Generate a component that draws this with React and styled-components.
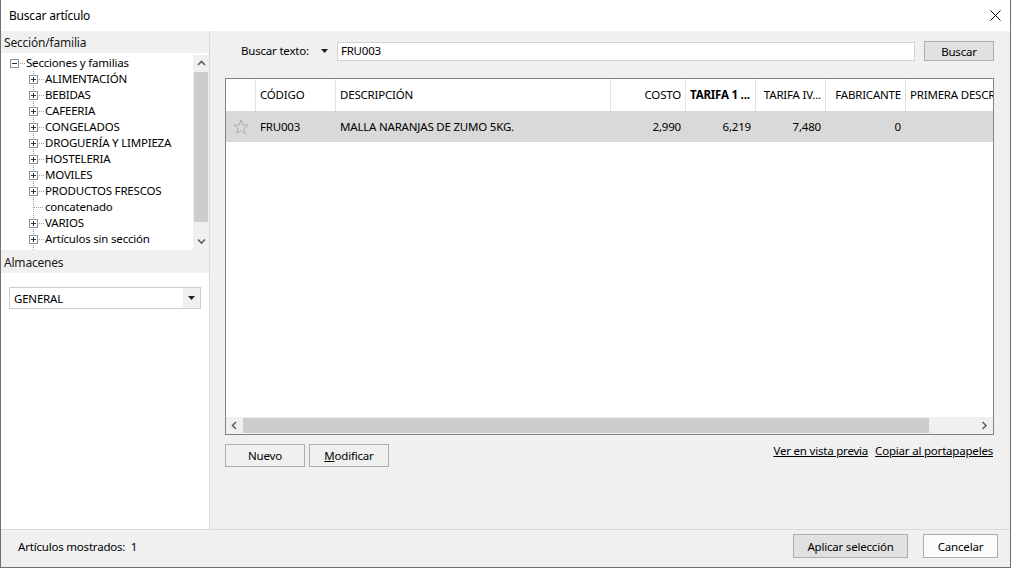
import React from 'react';
import styled, { createGlobalStyle } from 'styled-components';

const FONT = `"Noto Sans", "Segoe UI", "Liberation Sans", sans-serif`;

const Global = createGlobalStyle`
  html, body { margin: 0; padding: 0; background: #ffffff; }
  body { font-family: ${FONT}; font-size: 11.5px; letter-spacing: -0.2px; color: #000; }
  * { box-sizing: border-box; }
`;

const Window = styled.div`
  width: 1011px;
  height: 568px;
  display: flex;
  flex-direction: column;
  border: 1px solid #6f6f6f;
  border-top: none;
  background: #f0f0f0;
  overflow: hidden;
`;

const TitleBar = styled.div`
  flex: none;
  height: 31px;
  background: #ffffff;
  display: flex;
  align-items: center;
  justify-content: space-between;
  padding: 0 9px 0 8px;
  font-size: 12px;
`;

const Main = styled.div`
  flex: 1;
  min-height: 0;
  display: flex;
`;

const LeftPanel = styled.div`
  width: 209px;
  flex: none;
  background: #ffffff;
  border-right: 1px solid #dadada;
  display: flex;
  flex-direction: column;
`;

const PanelHeader = styled.div`
  height: ${p => p.$h}px;
  flex: none;
  background: #f0f0f0;
  display: flex;
  align-items: center;
  padding: 1px 0 0 3px;
  font-size: 12px;
  color: #1a1a1a;
`;

const TreeArea = styled.div`
  height: 197px;
  flex: none;
  display: flex;
  padding-top: 2px;
  background: #ffffff;
`;

const TreeList = styled.div`
  flex: 1;
  overflow: hidden;
  display: flex;
  flex-direction: column;
`;

const TreeRow = styled.div`
  height: 16px;
  flex: none;
  display: flex;
  align-items: center;
  padding-left: ${p => (p.$level === 0 ? 5 : 24)}px;
  white-space: nowrap;
`;

const TreeLabel = styled.span`
  line-height: 16px;
`;

const VScroll = styled.div`
  width: 16px;
  flex: none;
  background: #f0f0f0;
  display: flex;
  flex-direction: column;
`;

const ScrollArrow = styled.div`
  flex: none;
  width: ${p => p.$w || 16}px;
  height: ${p => p.$h || 17}px;
  display: flex;
  align-items: center;
  justify-content: center;
`;

const VThumb = styled.div`
  height: 150px;
  flex: none;
  margin: 0 1px;
  background: #cdcdcd;
`;

const Flex1 = styled.div`
  flex: 1;
`;

const ComboWrap = styled.div`
  padding: 14px 8px 0 8px;
`;

const Combo = styled.div`
  height: 22px;
  border: 1px solid #cccccc;
  background: #ffffff;
  display: flex;
  align-items: center;
`;

const ComboText = styled.div`
  flex: 1;
  padding-left: 4px;
`;

const ComboArrow = styled.div`
  width: 17px;
  height: 100%;
  background: #f0f0f0;
  display: flex;
  align-items: center;
  justify-content: center;
`;

const RightPanel = styled.div`
  flex: 1;
  min-width: 0;
  background: #f0f0f0;
  padding: 10px 16px 0 15px;
  display: flex;
  flex-direction: column;
`;

const SearchRow = styled.div`
  height: 20px;
  display: flex;
  align-items: center;
  padding-left: 16px;
`;

const SearchLabel = styled.span`
  margin-right: 10px;
  padding-bottom: 1px;
`;

const DropCaret = styled.span`
  width: 12px;
  display: flex;
  align-items: center;
  justify-content: center;
  margin-right: 6px;
`;

const TextBox = styled.div`
  flex: 1;
  height: 19px;
  background: #ffffff;
  border: 1px solid #d2d2d2;
  display: flex;
  align-items: center;
  padding: 0 0 1px 3px;
`;

const Button = styled.div`
  width: ${p => p.$w}px;
  height: ${p => p.$h}px;
  flex: none;
  background: ${p => p.$bg || '#e1e1e1'};
  border: 1px solid #adadad;
  display: flex;
  align-items: center;
  justify-content: center;
  margin-left: ${p => p.$ml || 0}px;
  color: #000;
`;

const Grid = styled.div`
  margin-top: 17px;
  height: 357px;
  flex: none;
  border: 1px solid #828282;
  background: #ffffff;
  display: flex;
  flex-direction: column;
  overflow: hidden;
`;

const COLS = '30px 80px 275px 75px 70px 70px 80px 87px';

const HeaderRow = styled.div`
  height: 32px;
  flex: none;
  display: grid;
  grid-template-columns: ${COLS};
  background: #ffffff;
`;

const HeaderCell = styled.div`
  border-right: ${p => (p.$last ? 'none' : '1px solid #e3e3e3')};
  display: flex;
  align-items: center;
  justify-content: ${p => (p.$right ? 'flex-end' : 'flex-start')};
  padding: 0 ${p => (p.$right ? 4 : 0)}px 1px ${p => (p.$right ? 0 : 4)}px;
  font-weight: ${p => (p.$bold ? 700 : 400)};
  white-space: nowrap;
  overflow: hidden;
`;

const DataRow = styled.div`
  height: 32px;
  flex: none;
  display: grid;
  grid-template-columns: ${COLS};
  background: #d9d9d9;
  border-bottom: 1px solid #ffffff;
`;

const Cell = styled.div`
  display: flex;
  align-items: center;
  justify-content: ${p => (p.$right ? 'flex-end' : p.$center ? 'center' : 'flex-start')};
  padding: 0 ${p => (p.$right ? 5 : 0)}px 0 ${p => (p.$right || p.$center ? 0 : 4)}px;
  white-space: nowrap;
  overflow: hidden;
`;

const HScroll = styled.div`
  height: 17px;
  flex: none;
  background: #f0f0f0;
  display: flex;
  align-items: stretch;
`;

const HThumb = styled.div`
  width: 686px;
  flex: none;
  margin: 1px 0;
  background: #cdcdcd;
`;

const ActionRow = styled.div`
  margin-top: 9px;
  display: flex;
  justify-content: space-between;
  align-items: flex-start;
`;

const ButtonGroup = styled.div`
  display: flex;
`;

const Links = styled.div`
  display: flex;
  gap: 7px;
  line-height: 13px;
  padding-right: 1px;
`;

const Link = styled.span`
  text-decoration: underline;
  color: #000;
`;

const Footer = styled.div`
  flex: none;
  height: 38px;
  border-top: 1px solid #dadada;
  background: #f0f0f0;
  display: flex;
  align-items: flex-start;
  padding: 4px 12px 0 17px;
`;

const FooterText = styled.div`
  flex: 1;
  line-height: 26px;
`;

const AccessKey = styled.span`
  text-decoration: underline;
`;

const CloseIcon = () => (
  <svg width="11" height="11" viewBox="0 0 11 11">
    <path d="M0.5 0.5 L10.5 10.5 M10.5 0.5 L0.5 10.5" stroke="#000" strokeWidth="1" fill="none" />
  </svg>
);

const TreeGlyph = ({ kind, line }) => (
  <svg width="20" height="16" viewBox="0 0 20 16" style={{ flex: 'none' }}>
    {line && (
      <line x1="8.5" y1="0" x2="8.5" y2="16" stroke="#a0a0a0" strokeDasharray="1 1" />
    )}
    {kind !== 'none' && (
      <line x1={kind === 'leaf' ? 9 : 14} y1="8.5" x2="19" y2="8.5" stroke="#a0a0a0" strokeDasharray="1 1" />
    )}
    {(kind === 'plus' || kind === 'minus') && (
      <>
        <rect x="4.5" y="4.5" width="8" height="8" fill="#ffffff" stroke="#919191" />
        <line x1="6" y1="8.5" x2="11" y2="8.5" stroke="#333" />
        {kind === 'plus' && <line x1="8.5" y1="6" x2="8.5" y2="11" stroke="#333" />}
      </>
    )}
  </svg>
);

const Chevron = ({ dir }) => {
  const pts = {
    up: '1,5 4.5,1.5 8,5',
    down: '1,1.5 4.5,5 8,1.5',
    left: '5,1 1.5,4.5 5,8',
    right: '1.5,1 5,4.5 1.5,8',
  }[dir];
  const vertical = dir === 'up' || dir === 'down';
  return (
    <svg width={vertical ? 9 : 7} height={vertical ? 7 : 9} viewBox={vertical ? '0 0 9 7' : '0 0 7 9'}>
      <polyline points={pts} fill="none" stroke="#606060" strokeWidth="1.6" />
    </svg>
  );
};

const Caret = () => (
  <svg width="7" height="4" viewBox="0 0 7 4">
    <polygon points="0,0 7,0 3.5,4" fill="#222" />
  </svg>
);

const Star = () => (
  <svg width="16" height="16" viewBox="0 0 16 16">
    <polygon
      points="8,1 9.9,6 15,6.2 11,9.4 12.4,14.6 8,11.6 3.6,14.6 5,9.4 1,6.2 6.1,6"
      fill="none"
      stroke="#b0b0b0"
      strokeWidth="1"
      strokeLinejoin="round"
    />
  </svg>
);

const families = [
  { name: 'ALIMENTACIÓN', kind: 'plus' },
  { name: 'BEBIDAS', kind: 'plus' },
  { name: 'CAFEERIA', kind: 'plus' },
  { name: 'CONGELADOS', kind: 'plus' },
  { name: 'DROGUERÍA Y LIMPIEZA', kind: 'plus' },
  { name: 'HOSTELERIA', kind: 'plus' },
  { name: 'MOVILES', kind: 'plus' },
  { name: 'PRODUCTOS FRESCOS', kind: 'plus' },
  { name: 'concatenado', kind: 'leaf' },
  { name: 'VARIOS', kind: 'plus' },
  { name: 'Artículos sin sección', kind: 'plus' },
];

const columns = [
  { label: '' },
  { label: 'CÓDIGO' },
  { label: 'DESCRIPCIÓN' },
  { label: 'COSTO', right: true },
  { label: 'TARIFA 1 ...', bold: true },
  { label: 'TARIFA IV...', right: true },
  { label: 'FABRICANTE', right: true },
  { label: 'PRIMERA DESCRIPCIÓN', last: true },
];

export default function App() {
  return (
    <>
      <Global />
      <Window>
        <TitleBar>
          <span>Buscar artículo</span>
          <CloseIcon />
        </TitleBar>
        <Main>
          <LeftPanel>
            <PanelHeader $h={22}>Sección/familia</PanelHeader>
            <TreeArea>
              <TreeList>
                <TreeRow $level={0}>
                  <TreeGlyph kind="minus" />
                  <TreeLabel>Secciones y familias</TreeLabel>
                </TreeRow>
                {families.map(f => (
                  <TreeRow key={f.name} $level={1}>
                    <TreeGlyph kind={f.kind} line />
                    <TreeLabel>{f.name}</TreeLabel>
                  </TreeRow>
                ))}
                <TreeRow $level={1}>
                  <TreeGlyph kind="none" line />
                </TreeRow>
              </TreeList>
              <VScroll>
                <ScrollArrow><Chevron dir="up" /></ScrollArrow>
                <VThumb />
                <Flex1 />
                <ScrollArrow><Chevron dir="down" /></ScrollArrow>
              </VScroll>
            </TreeArea>
            <PanelHeader $h={23}>Almacenes</PanelHeader>
            <ComboWrap>
              <Combo>
                <ComboText>GENERAL</ComboText>
                <ComboArrow><Caret /></ComboArrow>
              </Combo>
            </ComboWrap>
          </LeftPanel>
          <RightPanel>
            <SearchRow>
              <SearchLabel>Buscar texto:</SearchLabel>
              <DropCaret><Caret /></DropCaret>
              <TextBox>FRU003</TextBox>
              <Button $w={70} $h={20} $ml={9}>Buscar</Button>
            </SearchRow>
            <Grid>
              <HeaderRow>
                {columns.map((c, i) => (
                  <HeaderCell key={i} $right={c.right} $bold={c.bold} $last={c.last}>
                    {c.label}
                  </HeaderCell>
                ))}
              </HeaderRow>
              <DataRow>
                <Cell $center><Star /></Cell>
                <Cell>FRU003</Cell>
                <Cell>MALLA NARANJAS DE ZUMO 5KG.</Cell>
                <Cell $right>2,990</Cell>
                <Cell $right>6,219</Cell>
                <Cell $right>7,480</Cell>
                <Cell $right>0</Cell>
                <Cell></Cell>
              </DataRow>
              <Flex1 />
              <HScroll>
                <ScrollArrow $w={17} $h={17}><Chevron dir="left" /></ScrollArrow>
                <HThumb />
                <Flex1 />
                <ScrollArrow $w={17} $h={17}><Chevron dir="right" /></ScrollArrow>
              </HScroll>
            </Grid>
            <ActionRow>
              <ButtonGroup>
                <Button $w={80} $h={23} $bg="#f0f0f0">Nuevo</Button>
                <Button $w={80} $h={23} $bg="#f0f0f0" $ml={4}>
                  <span><AccessKey>M</AccessKey>odificar</span>
                </Button>
              </ButtonGroup>
              <Links>
                <Link>Ver en vista previa</Link>
                <Link>Copiar al portapapeles</Link>
              </Links>
            </ActionRow>
          </RightPanel>
        </Main>
        <Footer>
          <FooterText>Artículos mostrados:&nbsp;&nbsp;1</FooterText>
          <Button $w={115} $h={24}>Aplicar selección</Button>
          <Button $w={75} $h={24} $bg="#fbfbfb" $ml={15}>Cancelar</Button>
        </Footer>
      </Window>
    </>
  );
}
